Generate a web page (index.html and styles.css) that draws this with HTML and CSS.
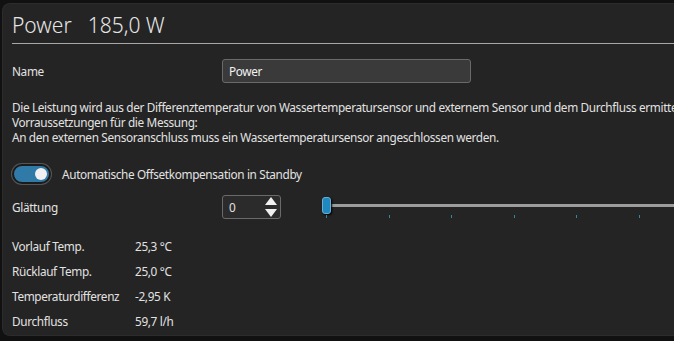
FILE: index.html
```html
<!DOCTYPE html>
<html>
<head>
  <meta charset="UTF-8">
  <title>Power</title>
  <link rel="stylesheet" href="styles.css">
</head>
<body>
  <div class="panel">
    <header class="title">
      <span class="title-name">Power</span>
      <span class="title-value">185,0 W</span>
    </header>

    <div class="row name-row">
      <label class="label">Name</label>
      <div class="textbox">Power</div>
    </div>

    <div class="desc">
      <p>Die Leistung wird aus der Differenztemperatur von Wassertemperatursensor und externem Sensor und dem Durchfluss ermittelt.</p>
      <p>Vorraussetzungen für die Messung:</p>
      <p>An den externen Sensoranschluss muss ein Wassertemperatursensor angeschlossen werden.</p>
    </div>

    <div class="toggle-row">
      <div class="toggle"><div class="knob"></div></div>
      <span>Automatische Offsetkompensation in Standby</span>
    </div>

    <div class="row smooth-row">
      <label class="label">Glättung</label>
      <div class="spin">
        <span>0</span>
        <svg class="arrows" width="12" height="20" viewBox="0 0 12 20">
          <polygon points="6,0 12,8 0,8" fill="#f0f0f0"/>
          <polygon points="0,12 12,12 6,20" fill="#f0f0f0"/>
        </svg>
      </div>
      <div class="slider">
        <div class="track"></div>
        <div class="handle"></div>
        <div class="ticks">
          <i></i><i></i><i></i><i></i><i></i><i></i>
        </div>
      </div>
    </div>

    <div class="values">
      <div class="vrow"><span class="vlabel">Vorlauf Temp.</span><span>25,3 °C</span></div>
      <div class="vrow"><span class="vlabel">Rücklauf Temp.</span><span>25,0 °C</span></div>
      <div class="vrow"><span class="vlabel">Temperaturdifferenz</span><span>-2,95 K</span></div>
      <div class="vrow"><span class="vlabel">Durchfluss</span><span>59,7 l/h</span></div>
    </div>
  </div>
</body>
</html>
```
FILE: styles.css
```css
/* dark settings panel */
body {
  margin: 0;
  padding: 3px 0 0 2px;
  background-color: #111111;
  font-family: "Noto Sans", "Open Sans", sans-serif;
  font-size: 11.8px;
  letter-spacing: -0.35px;
  color: #e2e2e2;
  overflow: hidden;
  height: 341px;
  box-sizing: border-box;
}

.panel {
  background-color: #242424;
  border: 1px solid #2c2c2c;
  border-right: none;
  border-radius: 8px 0 0 8px;
  height: 333px;
  box-sizing: border-box;
  padding: 0 0 0 9px;
  overflow: hidden;
  white-space: nowrap;
}

.title {
  height: 40px;
  border-bottom: 1px solid #a8a8a8;
  display: flex;
  align-items: center;
  gap: 16px;
  font-size: 21px;
  font-weight: 300;
  letter-spacing: 0;
  color: #e6e6e6;
  padding-top: 3px;
  box-sizing: border-box;
}

.row {
  display: flex;
  align-items: center;
}

.label {
  width: 210px;
}

.name-row {
  margin-top: 15px;
}

.textbox {
  width: 249px;
  height: 24px;
  box-sizing: border-box;
  background-color: #3a3a3a;
  border: 1px solid #6a6a6a;
  border-radius: 3px;
  padding: 0 6px;
  line-height: 22px;
  color: #f2f2f2;
}

.desc {
  margin-top: 17px;
}

.desc p {
  margin: 0;
  line-height: 15px;
}

.toggle-row {
  display: flex;
  align-items: center;
  gap: 11px;
  margin-top: 19px;
}

.toggle {
  width: 39px;
  height: 20px;
  box-sizing: border-box;
  border-radius: 10px;
  background-color: #2f7aa6;
  border: 2px solid #1b1b1b;
  box-shadow: 0 0 0 1px #555;
  display: flex;
  align-items: center;
  justify-content: flex-end;
  padding-right: 2px;
}

.knob {
  width: 12px;
  height: 12px;
  border-radius: 50%;
  background-color: #f1f1f1;
}

.smooth-row {
  margin-top: 11px;
}

.spin {
  width: 59px;
  height: 24px;
  box-sizing: border-box;
  background-color: #2b2b2b;
  border: 1px solid #6a6a6a;
  border-radius: 3px;
  display: flex;
  align-items: center;
  justify-content: space-between;
  padding: 0 3px 0 6px;
}

.slider {
  flex: 1;
  margin-left: 41px;
  height: 24px;
  position: relative;
}

.track {
  position: absolute;
  left: 0;
  right: 0;
  top: 9px;
  height: 3px;
  background-color: #9d9d9d;
}

.handle {
  position: absolute;
  left: 0;
  top: 2px;
  width: 9px;
  height: 17px;
  box-sizing: border-box;
  background-color: #1f88c0;
  border: 1px solid #6aaed3;
  border-radius: 3px;
  box-shadow: 1px 1px 2px #000;
}

.ticks {
  position: absolute;
  left: 4px;
  top: 20px;
  display: flex;
  gap: 61.6px;
}

.ticks i {
  display: block;
  width: 1px;
  height: 3px;
  background-color: #2f8aa0;
}

.values {
  margin-top: 14px;
}

.vrow {
  display: flex;
  height: 25px;
  align-items: center;
}

.vlabel {
  width: 123px;
}
```
